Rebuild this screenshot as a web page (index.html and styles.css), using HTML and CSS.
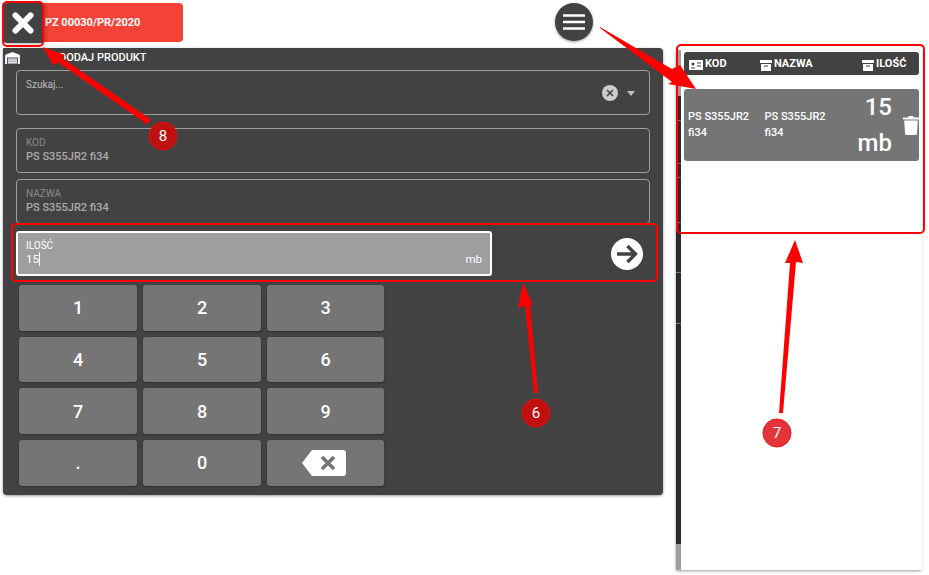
FILE: index.html
```html
<!DOCTYPE html>
<html lang="en">
<head>
  <meta charset="UTF-8">
  <meta name="viewport" content="width=device-width, initial-scale=1.0">
  <title>PZ 00030/PR/2020</title>
  <link rel="stylesheet" href="styles.css">
</head>
<body>

  <div class="page">

    <!-- Left column -->
    <div class="main">
      <div class="topbar">
        <button class="close-btn">
          <svg viewBox="0 0 24 24" width="26" height="26"><path d="M5 5 L19 19 M19 5 L5 19" stroke="#fff" stroke-width="5.4" stroke-linecap="round"/></svg>
        </button>
        <div class="doc-title">PZ 00030/PR/2020</div>
        <button class="menu-btn">
          <svg viewBox="0 0 24 24" width="24" height="24"><path d="M1 5.5 H23 M1 12 H23 M1 18.5 H23" stroke="#fff" stroke-width="2.6"/></svg>
        </button>
      </div>

      <div class="panel">
        <div class="panel-title">
          <svg class="warehouse" viewBox="0 0 16 13" width="15" height="12"><path d="M0 13 V4 Q0 3 1 2.6 L8 0 L15 2.6 Q16 3 16 4 V13 H14 V6 H2 V13 Z" fill="#fff"/><path d="M3 7 H13 V13 H3 Z" fill="#fff"/><path d="M3 8.5 H13 M3 10.5 H13 M3 12.5 H13" stroke="#7f8796" stroke-width=".9"/></svg>
          <span>DODAJ PRODUKT</span>
        </div>

        <div class="field field-search">
          <span class="field-label search-label">Szukaj...</span>
          <span class="clear-icon">
            <svg viewBox="0 0 16 16" width="16" height="16"><circle cx="8" cy="8" r="8" fill="#ccc"/><path d="M5 5 L11 11 M11 5 L5 11" stroke="#424242" stroke-width="1.6"/></svg>
          </span>
          <span class="caret"></span>
        </div>

        <div class="field field-kod">
          <span class="field-label">KOD</span>
          <span class="field-value">PS S355JR2 fi34</span>
        </div>

        <div class="field field-nazwa">
          <span class="field-label">NAZWA</span>
          <span class="field-value">PS S355JR2 fi34</span>
        </div>

        <div class="qty-row">
          <div class="qty-field">
            <span class="qty-label">ILOŚĆ</span>
            <div class="qty-line">
              <span class="qty-value">15</span>
              <span class="qty-unit">mb</span>
            </div>
          </div>
          <button class="next-btn">
            <svg viewBox="0 0 32 32" width="32" height="32"><circle cx="16" cy="16" r="16" fill="#fff"/><path d="M6 16 H24 M16.5 8 L24.5 16 L16.5 24" fill="none" stroke="#424242" stroke-width="3.4"/></svg>
          </button>
        </div>

        <div class="keypad">
          <button class="key">1</button>
          <button class="key">2</button>
          <button class="key">3</button>
          <button class="key">4</button>
          <button class="key">5</button>
          <button class="key">6</button>
          <button class="key">7</button>
          <button class="key">8</button>
          <button class="key">9</button>
          <button class="key">.</button>
          <button class="key">0</button>
          <button class="key key-back">
            <svg viewBox="0 0 44 26" width="44" height="26"><path d="M10 0 H41 Q44 0 44 3 V23 Q44 26 41 26 H10 L0 13 Z" fill="#fff"/><path d="M20 7 L32 19 M32 7 L20 19" stroke="#757575" stroke-width="3.6"/></svg>
          </button>
        </div>
      </div>
    </div>

    <!-- Right column -->
    <div class="side">
      <div class="side-strip">
        <i class="tick tick-a"></i>
        <i class="tick tick-b"></i>
        <i class="tick tick-c"></i>
        <i class="tick tick-d"></i>
        <i class="tick tick-e"></i>
        <i class="tick tick-f"></i>
      </div>
      <div class="side-body">
        <div class="list-head">
          <span class="head-cell head-kod">
            <svg viewBox="0 0 14 10" width="14" height="10"><path d="M0 0 H14 V10 H0 Z" fill="#fff"/><circle cx="4" cy="4" r="1.5" fill="#424242"/><path d="M2 8 H6 M8 3 H12 M8 6 H12" stroke="#424242"/></svg>
            KOD
          </span>
          <span class="head-cell head-nazwa">
            <svg viewBox="0 0 12 11" width="12" height="11"><path d="M0 0 H12 V3 H0 Z M1 4 H11 V11 H1 Z" fill="#fff"/><path d="M4 6 H8" stroke="#424242"/></svg>
            NAZWA
          </span>
          <span class="head-cell head-ilosc">
            <svg viewBox="0 0 12 11" width="12" height="11"><path d="M0 0 H12 V3 H0 Z M1 4 H11 V11 H1 Z" fill="#fff"/><path d="M4 6 H8" stroke="#424242"/></svg>
            ILOŚĆ
          </span>
        </div>

        <div class="list-item">
          <span class="item-text item-kod">PS S355JR2 fi34</span>
          <span class="item-text item-nazwa">PS S355JR2 fi34</span>
          <span class="item-qty">15 mb</span>
          <svg class="trash" viewBox="0 0 16 20" width="16" height="20"><path d="M0 2.5 H5 L6 1 H10 L11 2.5 H16 V4.5 H0 Z M1.2 5.5 H14.8 L14 18.5 Q14 20 12.5 20 H3.5 Q2 20 2 18.5 Z" fill="#fff"/></svg>
        </div>
      </div>
    </div>

  </div>

  <!-- Annotations over the screenshot -->
  <svg class="arrows" width="929" height="575" viewBox="0 0 929 575">
    <g fill="none" stroke="#f00" stroke-width="2">
      <rect x="3" y="2" width="40" height="44" rx="4"/>
      <rect x="12" y="224" width="645" height="57" rx="4"/>
      <rect x="677" y="45" width="247" height="188" rx="4"/>
    </g>
    <g fill="#f00">
      <path d="M43 47 L65 55 L61.7 57.6 L150.7 119.6 L147.3 124.4 L58.3 62.4 L53 65 Z"/>
      <path d="M600 27 L672 69 L680 65 L696 89 L668 84 L672 82 L600 28 Z"/>
      <path d="M523 283 L533 305 L530 305 L538 393 L534 393 L525 306 L518 308 Z"/>
      <path d="M795 240 L803 263 L796 262 L783 413 L779 413 L790 263 L785 263 Z"/>
    </g>
    <g font-family="'Liberation Mono', monospace" font-size="15" text-anchor="middle" fill="#fff">
      <circle cx="163" cy="136" r="14" fill="#c00f0f" stroke="#e01010" stroke-width="1"/>
      <text x="163" y="141">8</text>
      <circle cx="536" cy="413" r="14" fill="#c00f0f" stroke="#e01010" stroke-width="1"/>
      <text x="536" y="418">6</text>
      <circle cx="777" cy="433" r="14" fill="#e3343a" stroke="#f01515" stroke-width="1"/>
      <text x="777" y="438">7</text>
    </g>
  </svg>

</body>
</html>
```

FILE: styles.css
```css
/* Basic Styling */
* {
  box-sizing: border-box;
  font-family: Roboto, Arial, sans-serif;
}
html, body {
  height: 100%;
}
body {
  margin: 0;
  background-color: #fff;
  overflow: hidden;
}
button {
  border: 0;
  padding: 0;
}
.page {
  display: flex;
  align-items: flex-start;
  padding: 3px 0 0 3px;
}

/* Top bar */
.main {
  width: 660px;
  flex-shrink: 0;
}
.topbar {
  display: flex;
  align-items: flex-start;
  height: 45px;
}
.close-btn {
  display: flex;
  align-items: center;
  justify-content: center;
  width: 40px;
  height: 40px;
  background-color: #424242;
  border-radius: 4px 0 0 4px;
  box-shadow: 2px 1px 5px rgba(0, 0, 0, 0.3);
  position: relative;
}
.doc-title {
  width: 140px;
  height: 39px;
  padding-left: 2px;
  line-height: 39px;
  background-color: #f44336;
  border-radius: 0 4px 4px 0;
  color: #fff;
  font-size: 11px;
  font-weight: 700;
}
.menu-btn {
  display: flex;
  align-items: center;
  justify-content: center;
  width: 38px;
  height: 38px;
  margin-left: 372px;
  border-radius: 50%;
  background-color: #424242;
  box-shadow: 0 1px 3px rgba(0, 0, 0, 0.4);
}

/* Panel */
.panel {
  height: 447px;
  padding: 0 13px;
  background-color: #424242;
  border-radius: 0 4px 4px 4px;
  box-shadow: 0 1px 3px rgba(0, 0, 0, 0.4);
}
.panel-title {
  display: flex;
  align-items: flex-start;
  height: 22px;
  margin: 0 -13px;
  padding: 3px 0 0 2px;
  color: #fff;
  font-size: 11px;
  font-weight: 500;
  line-height: 13px;
}
.warehouse {
  margin-top: 1px;
}
.panel-title span {
  margin-left: 39px;
}

/* Form fields */
.field {
  position: relative;
  display: flex;
  flex-direction: column;
  height: 45px;
  padding: 7px 9px;
  border: 1px solid #9e9e9e;
  border-radius: 4px;
}
.field-search {
  margin-bottom: 13px;
}
.field-kod {
  margin-bottom: 6px;
}
.field-nazwa {
  margin-bottom: 7px;
}
.field-label {
  color: #8a8a8a;
  font-size: 10px;
  line-height: 13px;
}
.search-label {
  color: #bdbdbd;
}
.field-value {
  color: #aaa;
  font-size: 11px;
  font-weight: 500;
  line-height: 15px;
}
.clear-icon {
  position: absolute;
  top: 14px;
  right: 31px;
  display: flex;
}
.caret {
  position: absolute;
  top: 20px;
  right: 14px;
  border-top: 5px solid #bdbdbd;
  border-left: 4px solid transparent;
  border-right: 4px solid transparent;
}

/* Quantity */
.qty-row {
  display: flex;
  align-items: center;
  justify-content: space-between;
  height: 45px;
  margin-bottom: 9px;
  padding-right: 7px;
}
.qty-field {
  width: 476px;
  height: 45px;
  padding: 6px 8px 0;
  border: 2px solid #fff;
  border-radius: 3px;
  background-color: #9e9e9e;
  color: #fff;
}
.qty-label {
  display: block;
  font-size: 10px;
  line-height: 13px;
}
.qty-line {
  display: flex;
  justify-content: space-between;
  font-size: 11.5px;
  line-height: 14px;
}
.qty-value {
  border-right: 1px solid #fff;
}
.next-btn {
  display: flex;
  background: none;
  margin-top: 1px;
}

/* Keypad */
.keypad {
  display: grid;
  grid-template-columns: 118px 118px 117px;
  grid-auto-rows: 45.7px;
  gap: 6px;
  margin-left: 3px;
}
.key {
  display: flex;
  align-items: center;
  justify-content: center;
  background-color: #757575;
  border-radius: 3px;
  color: #fff;
  font-size: 18px;
  font-weight: 500;
  box-shadow: 0 1px 2px rgba(0, 0, 0, 0.3);
}
.key-back svg {
  margin-right: 4px;
}

/* Side list */
.side {
  display: flex;
  width: 245px;
  height: 520px;
  margin: 47px 0 0 13px;
  box-shadow: 0 1px 3px rgba(0, 0, 0, 0.4);
}
.side-strip {
  position: relative;
  width: 5px;
  flex-shrink: 0;
  background: linear-gradient(#9e9e9e 46px, #2a2a2a 46px, #2a2a2a 494px, #9e9e9e 494px);
}
.tick {
  position: absolute;
  left: 0;
  width: 5px;
  height: 1px;
  background-color: #777;
}
.tick-a { top: 70px; }
.tick-b { top: 113px; }
.tick-c { top: 127px; }
.tick-d { top: 172px; }
.tick-e { top: 222px; }
.tick-f { top: 273px; }
.side-body {
  flex: 1;
  padding: 2px 3px 0;
  background-color: #fff;
}
.list-head {
  display: flex;
  align-items: center;
  height: 23px;
  margin-bottom: 14px;
  padding-left: 5px;
  background-color: #424242;
  border-radius: 3px;
}
.head-cell {
  display: flex;
  align-items: center;
  gap: 2px;
  color: #fff;
  font-size: 11px;
  font-weight: 700;
}
.head-cell svg {
  margin-top: 3px;
}
.head-kod { width: 71px; }
.head-nazwa { width: 102px; }
.list-item {
  display: flex;
  align-items: center;
  height: 72px;
  padding-left: 4px;
  background-color: #757575;
  border-radius: 3px;
  color: #fff;
}
.item-text {
  width: 76.5px;
  font-size: 11px;
  font-weight: 500;
  line-height: 16px;
}
.item-qty {
  width: 51px;
  font-size: 24px;
  font-weight: 500;
  line-height: 36px;
  text-align: right;
}
.trash {
  margin-left: 11px;
}

/* Annotations */
.arrows {
  position: absolute;
  top: 0;
  left: 0;
  pointer-events: none;
}
```
